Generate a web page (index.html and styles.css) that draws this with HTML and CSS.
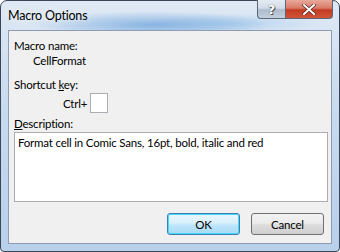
FILE: index.html
```html
<!doctype html>
<html lang="en">
  <head>
    <meta charset="UTF-8" />
    <title>Macro Options</title>
    <link rel="stylesheet" href="styles.css">
  </head>
  <body>
    <div class="window">
      <div class="titlebar">
        <span class="title">Macro Options</span>
      </div>
      <div class="caption-buttons">
        <div class="cap-btn help">?</div>
        <div class="cap-btn close">
          <svg width="14" height="11" viewBox="0 0 14 11">
            <path d="M2 1 L12 10 M12 1 L2 10" stroke="#5a2a22" stroke-width="3.4" stroke-linecap="square"/>
            <path d="M2 1 L12 10 M12 1 L2 10" stroke="#fff" stroke-width="2" stroke-linecap="square"/>
          </svg>
        </div>
      </div>

      <div class="client">
        <div class="label first">Macro name:</div>
        <div class="value">CellFormat</div>

        <div class="label gap">Shortcut <u>k</u>ey:</div>
        <div class="shortcut">
          <span>Ctrl+</span>
          <div class="keybox"></div>
        </div>

        <div class="label"><u>D</u>escription:</div>
        <div class="description">Format cell in Comic Sans, 16pt, bold, italic and red</div>

        <div class="actions">
          <button class="btn default">OK</button>
          <button class="btn">Cancel</button>
        </div>
      </div>
    </div>
  </body>
</html>
```

FILE: styles.css
```css
/* Windows 7 style dialog */
html, body {
  margin: 0;
  padding: 0;
  background: #ffffff;
}

.window {
  position: relative;
  width: 340px;
  height: 252px;
  box-sizing: border-box;
  border: 1px solid #3a4658;
  border-radius: 7px 7px 4px 4px;
  background:
    radial-gradient(ellipse 120px 14px at 150px 24px, rgba(70, 140, 210, 0.55), rgba(70, 140, 210, 0) 100%),
    radial-gradient(ellipse 90px 10px at 230px 22px, rgba(150, 195, 235, 0.5), rgba(150, 195, 235, 0) 100%),
    linear-gradient(to bottom, #dfe9f5 0%, #c9dbef 40%, #b8d0ea 100%);
  display: flex;
  flex-direction: column;
  font-family: Lato, "Noto Sans", sans-serif;
  font-size: 11.5px;
  letter-spacing: -0.2px;
  color: #000;
}

.titlebar {
  height: 29px;
  padding-left: 7px;
  display: flex;
  align-items: center;
  padding-bottom: 1px;
  box-sizing: border-box;
}

.title {
  font-size: 12.5px;
  color: #000;
  text-shadow: 0 0 6px rgba(255, 255, 255, 0.9);
}

.caption-buttons {
  position: absolute;
  top: -1px;
  right: 6px;
  display: flex;
}

.cap-btn {
  height: 19px;
  box-sizing: border-box;
  border: 1px solid #5b6677;
  border-top: none;
  display: flex;
  align-items: center;
  justify-content: center;
}

.help {
  width: 28px;
  border-radius: 0 0 0 4px;
  border-right: none;
  background: linear-gradient(to bottom, #e4ebf3 0%, #d2dce8 45%, #aebbcb 55%, #c3d0de 100%);
  color: #fff;
  font-family: "DejaVu Sans", sans-serif;
  font-weight: bold;
  font-size: 13px;
  letter-spacing: 0;
  text-shadow: 0 0 1px #444, 1px 1px 0 #555;
}

.close {
  width: 48px;
  border-radius: 0 0 4px 0;
  background: linear-gradient(to bottom, #e9a99b 0%, #d97b68 45%, #c23b22 55%, #d2543a 100%);
}

.client {
  flex: 1;
  margin: 0 7px 7px 7px;
  border: 1px solid #8e9bb0;
  background: #f0f0f0;
  padding: 0 5px;
  display: flex;
  flex-direction: column;
}

.label {
  line-height: 14px;
  height: 14px;
}

.first {
  margin-top: 8px;
}

.value {
  line-height: 14px;
  margin: 1px 0 0 19px;
}

.gap {
  margin-top: 10px;
}

.shortcut {
  display: flex;
  align-items: center;
  margin: 1px 0 0 49px;
  gap: 3px;
}

.keybox {
  width: 16px;
  height: 18px;
  background: #fff;
  border: 1px solid #abadb3;
}

.shortcut + .label {
  margin-top: 4px;
}

.description {
  margin-top: 1px;
  height: 70px;
  box-sizing: border-box;
  width: 314px;
  background: #fff;
  border: 1px solid #abadb3;
  padding: 3px 3px;
  line-height: 14px;
}

.actions {
  display: flex;
  justify-content: flex-end;
  gap: 11px;
  margin-top: 11px;
  padding-right: 2px;
}

.btn {
  width: 73px;
  height: 22px;
  box-sizing: border-box;
  border: 1px solid #707070;
  border-radius: 3px;
  background: linear-gradient(to bottom, #f2f2f2 0%, #ebebeb 45%, #dddddd 55%, #cfcfcf 100%);
  font-family: inherit;
  font-size: 11.5px;
  letter-spacing: inherit;
  color: #000;
  padding: 0;
}

.btn.default {
  border-color: #3c7fb1;
  box-shadow: inset 0 0 0 1px #48d8fb;
  background: linear-gradient(to bottom, #eaf6fd 0%, #d9f0fc 45%, #bee6fd 55%, #a7d9f5 100%);
}
```
